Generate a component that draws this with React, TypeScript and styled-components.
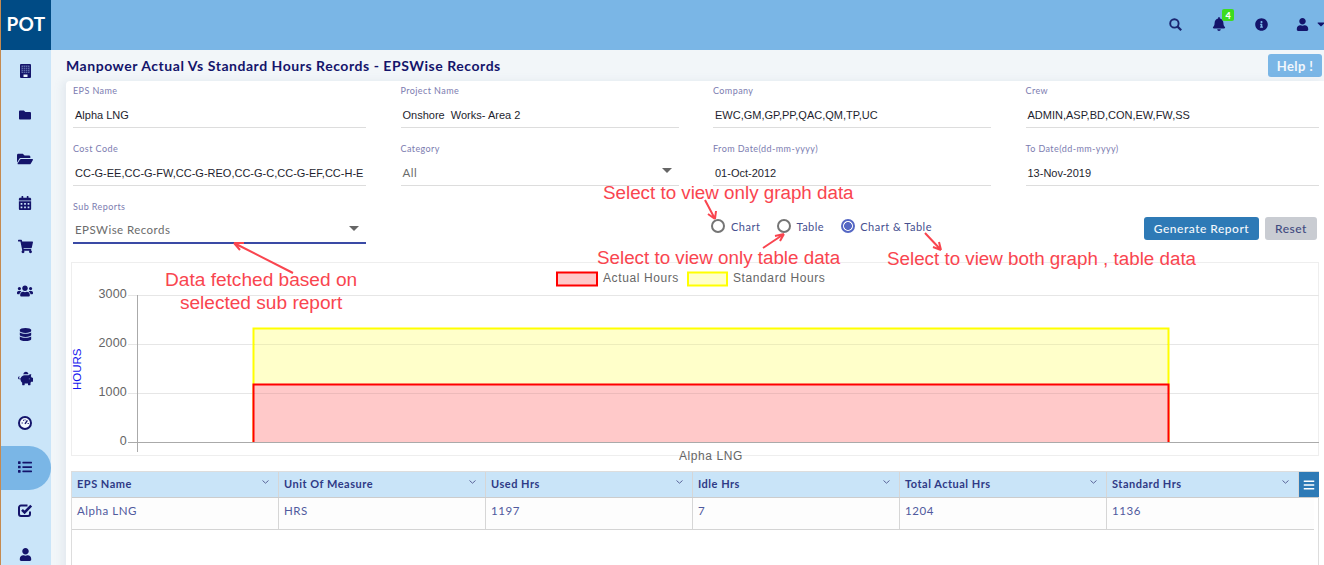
import React from "react";
import styled, { createGlobalStyle } from "styled-components";
import {
  FaFolder, FaFolderOpen, FaCalendarAlt, FaShoppingCart, FaUsers, FaDatabase,
  FaPiggyBank, FaList, FaUser, FaBell,
  FaInfoCircle, FaCaretDown, FaBars,
} from "react-icons/fa";

const Global = createGlobalStyle`
  html, body { margin: 0; padding: 0; height: 565px; overflow: hidden; background: #f2f6f9; }
  body { font-family: Lato, "Liberation Sans", sans-serif; }
  #root { height: 565px; }
`;
const Page = styled.div`
  position: relative; width: 1324px; height: 565px; overflow: hidden;
  display: grid; grid-template-columns: 51px 1fr;
`;
const Side = styled.aside`
  border-left: 1px solid #c58a50; background: #cae5f9; display: flex; flex-direction: column;
`;
const Logo = styled.div`
  height: 50px; flex: none; background: #004b85; color: #fff; font-weight: 700; font-size: 19px;
  display: flex; align-items: center; justify-content: center; padding-bottom: 4px; box-sizing: border-box;
  font-family: Lato, sans-serif; letter-spacing: 0.3px;
`;
const NavItem = styled.div<{ $active?: boolean }>`
  height: 44px; flex: none; display: flex; align-items: center; justify-content: center; padding: 0 2px 3px 0;
  box-sizing: border-box; color: #14146b; font-size: 14px;
  background: ${(p) => (p.$active ? "#7ab6e6" : "transparent")};
  border-radius: ${(p) => (p.$active ? "0 22px 22px 0" : "0")};
`;
const Main = styled.main`
  display: flex; flex-direction: column; min-width: 0;
`;
const Top = styled.header`
  height: 50px; flex: none; background: #7ab6e6; display: flex; justify-content: flex-end; color: #14146b;
`;
const TopItem = styled.div`
  position: relative; width: 43px; display: flex; align-items: center; justify-content: center; font-size: 13px;
  padding-bottom: 2px; box-sizing: border-box;
`;
const UserItem = styled(TopItem)`
  width: 41px; justify-content: flex-start; padding-left: 13px; gap: 6px; overflow: visible;
  svg + svg { font-size: 12px; flex: none; }
  svg { flex: none; }
`;
const Badge = styled.span`
  position: absolute; left: 25px; top: 9px; width: 12px; height: 12px; border-radius: 2px; background: #3ddc1f;
  color: #fff; font-size: 9px; font-weight: 900; display: flex; align-items: center; justify-content: center;
`;
const TitleRow = styled.div`
  height: 31px; flex: none; display: flex; align-items: center; justify-content: space-between;
  padding: 0 2px 0 15px; box-sizing: border-box;
`;
const Title = styled.h1`
  margin: 0; font-size: 14px; font-weight: 700; color: #14146b; letter-spacing: 0.54px;
`;
const Help = styled.button`
  width: 54px; height: 23px; border: 0; border-radius: 3px; background: #7ab6e6; color: #f2f7fc;
  font: 700 13px Lato, sans-serif; letter-spacing: 0.4px; padding: 0;
`;
const Card = styled.section`
  flex: 1; margin-left: 15px; background: #fff; border-radius: 4px 0 0 0; padding: 0 5px 0 5px;
  box-shadow: -4px 0 8px rgba(120, 150, 170, 0.12); min-height: 0; display: flex; flex-direction: column;
`;
const FormGrid = styled.div`
  display: grid; grid-template-columns: 293px 278px 278px 293px; column-gap: 34.5px; padding: 0 0 0 2px;
`;
const Field = styled.div<{ $w?: number }>`
  height: 58px; box-sizing: border-box; padding-top: 4px; flex: none;
  ${(p) => (p.$w ? `width: ${p.$w}px;` : "")}
`;
const Label = styled.div`
  font-size: 9px; line-height: 12px; color: #7c7cb0; letter-spacing: 0.42px; height: 12px;
`;
const Value = styled.div<{ $muted?: boolean; $active?: boolean }>`
  position: relative; height: 31px; padding: ${(p) => (p.$active ? "7px" : "8px")} 2px 0 2px; box-sizing: border-box; white-space: nowrap; overflow: hidden;
  line-height: 20px;
  border-bottom: ${(p) => (p.$active ? "2px solid #3a4aa5" : "1px solid #ddd")};
  font-family: ${(p) => (p.$muted ? 'Lato, sans-serif' : '"Liberation Sans", sans-serif')};
  font-size: ${(p) => (p.$muted ? "11.5px" : "11px")};
  letter-spacing: ${(p) => (p.$muted ? "0.45px" : "0")};
  color: ${(p) => (p.$muted ? "#6b6b6b" : "#1e1e2e")};
`;
const Caret = styled.span`
  position: absolute; right: 7px; top: 13px; width: 0; height: 0;
  border-left: 5px solid transparent; border-right: 5px solid transparent; border-top: 5px solid #666;
`;
const ActionRow = styled.div`
  display: flex; align-items: flex-start; padding-left: 2px; height: 58px;
`;
const Radios = styled.div`
  display: flex; align-items: center; margin-left: 345px; margin-top: 20px; height: 18px;
  color: #46508f; font-size: 11px; letter-spacing: 0.5px;
`;
const Radio = styled.span<{ $on?: boolean; $gap: number; $after: number }>`
  width: 14px; height: 14px; border-radius: 50%; box-sizing: border-box; flex: none;
  margin: 0 ${(p) => p.$after}px 0 ${(p) => p.$gap}px;
  border: 2px solid ${(p) => (p.$on ? "#5567c4" : "#757575")};
  background: ${(p) => (p.$on ? "radial-gradient(circle, #5567c4 0 3.6px, #fff 4.2px)" : "#fff")};
`;
const Buttons = styled.div`
  display: flex; gap: 6px; margin-left: auto; margin-right: 2px; margin-top: 20px;
`;
const Primary = styled.button`
  width: 115px; height: 23px; border: 0; border-radius: 3px; background: #2e7ab6; color: #f4f8fc; padding: 0;
  font: 500 12px Lato, sans-serif; letter-spacing: 0.5px;
`;
const Secondary = styled.button`
  width: 52px; height: 23px; border: 0; border-radius: 3px; background: #c9ccd2; color: #3f4a80; padding: 0;
  font: 500 12px Lato, sans-serif; letter-spacing: 0.5px;
`;
const ChartBox = styled.div`
  height: 194px; width: 1248px; box-sizing: border-box; border: 1px solid #eee; flex: none; margin-top: 7px;
  svg { display: block; overflow: visible; }
`;
const Grid = styled.div`
  margin-top: 15px; width: 1248px; flex: 1; border: 1px solid #ddd; border-bottom: 0; box-sizing: border-box; min-height: 0;
`;
const HeadRow = styled.div`
  display: grid; grid-template-columns: repeat(5, 207px) 192px 1fr; height: 25px; background: #c9e4f8; border-bottom: 1px solid #ccc;
`;
const HeadCell = styled.div`
  position: relative; padding: 0 0 2px 5px; display: flex; align-items: center; font-size: 11px; font-weight: 700;
  color: #2f3a86; letter-spacing: 0.5px; border-right: 1px solid #d6d6d6; box-sizing: border-box;
  svg { position: absolute; right: 9px; top: 8px; }
`;
const Menu = styled.div`
  background: #2e7ab6; color: #fff; display: flex; align-items: center; justify-content: center; font-size: 12px;
  width: 20px; justify-self: end;
`;
const BodyRow = styled.div`
  display: grid; grid-template-columns: repeat(6, 207px); width: 1242px; height: 31px; background: #fdfdfd; border-bottom: 1px solid #d4d4d4;
`;
const BodyCell = styled.div`
  padding: 0 0 7px 5px; display: flex; align-items: center; font-size: 11.5px; color: #505a9e; letter-spacing: 0.55px;
  border-right: 1px solid #d6d6d6; box-sizing: border-box;
  &:last-child { border-right: 0; }
`;
const Note = styled.div<{ $x: number; $y: number; $center?: boolean }>`
  position: absolute; left: ${(p) => p.$x}px; top: ${(p) => p.$y}px;
  font: ${(p) => (p.$center ? "19.1px" : "18.8px")}/22.5px "Liberation Sans", sans-serif; color: #f9454f; white-space: nowrap;
  text-align: ${(p) => (p.$center ? "center" : "left")};
`;
const Arrows = styled.svg`
  position: absolute; left: 0; top: 0; pointer-events: none;
`;

const Calc = () => (
  <svg width="11" height="14" viewBox="0 0 11 14">
    <rect width="11" height="14" rx="1" fill="#14146b" />
    <rect x="1.5" y="1.5" width="8" height="7.5" fill="#5c6aa8" />
    <path d="M1.5 3.5h8M1.5 5.5h8M1.5 7.5h8M3.5 1.5v7.5M5.5 1.5v7.5M7.5 1.5v7.5" stroke="#14146b" strokeWidth="0.6" />
    <rect x="3.5" y="10.5" width="4" height="2.5" fill="#e8f2fb" />
  </svg>
);
const Gauge = () => (
  <svg width="14" height="14" viewBox="0 0 14 14">
    <circle cx="7" cy="7" r="6" fill="#f3f8fd" stroke="#14146b" strokeWidth="2" />
    <path d="M7 7.8 L9.4 4.4" stroke="#14146b" strokeWidth="1.4" />
    <path d="M3.6 7h1.2M9.6 7.5h1.2M5 4.3h1M7 3.4v1" stroke="#14146b" strokeWidth="1" />
  </svg>
);
const CheckBox = () => (
  <svg width="15" height="15" viewBox="0 0 15 15" fill="none">
    <path d="M12 8.5v2.5a2 2 0 0 1-2 2H3a2 2 0 0 1-2-2V4.5a2 2 0 0 1 2-2h6.5" stroke="#14146b" strokeWidth="2" />
    <path d="M4 6.8 L6.6 9.4 L13.2 2.6" stroke="#14146b" strokeWidth="2.6" />
  </svg>
);
const Search = () => (
  <svg width="13" height="13" viewBox="0 0 13 13" fill="none" stroke="#1a2570">
    <circle cx="5.4" cy="5.4" r="4.2" strokeWidth="1.9" />
    <path d="M8.6 8.6 L12.2 12.2" strokeWidth="2.2" />
  </svg>
);
const Chevron = () => (
  <svg width="7" height="4" viewBox="0 0 7 4" fill="none" stroke="#5a6499" strokeWidth="1">
    <path d="M0.5 0.5 L3.5 3.2 L6.5 0.5" />
  </svg>
);

const nav: React.ReactNode[] = [
  <Calc />, <FaFolder size={12} />, <FaFolderOpen size={16} />, <FaCalendarAlt size={14} />,
  <FaShoppingCart size={15} />, <FaUsers size={16} />, <FaDatabase size={13} />, <FaPiggyBank size={15} />,
  <Gauge />, <FaList size={14} />, <CheckBox />, <FaUser size={13} />,
];
const fields = [
  ["EPS Name", "Alpha LNG"], ["Project Name", "Onshore  Works- Area 2"], ["Company", "EWC,GM,GP,PP,QAC,QM,TP,UC"], ["Crew", "ADMIN,ASP,BD,CON,EW,FW,SS"],
  ["Cost Code", "CC-G-EE,CC-G-FW,CC-G-REO,CC-G-C,CC-G-EF,CC-H-E"], ["Category", "All"], ["From Date(dd-mm-yyyy)", "01-Oct-2012"], ["To Date(dd-mm-yyyy)", "13-Nov-2019"],
];
const heads = ["EPS Name", "Unit Of Measure", "Used Hrs", "Idle Hrs", "Total Actual Hrs", "Standard Hrs"];
const cells = ["Alpha LNG", "HRS", "1197", "7", "1204", "1136"];
const ticks: [string, number][] = [["3000", 295], ["2000", 344], ["1000", 393], ["0", 442]];
const arrows = [
  "M293 273 L234 243 M234 243 l10 0 M234 243 l6 7",
  "M705 200 L715 219 M715 219 l-7 -5 M715 219 l1 -8",
  "M763 248 L784 234 M784 234 l-9 2 M784 234 l-4 7",
  "M925 233 L941 250 M941 250 l-2 -8 M941 250 l-8 -3",
];

const Chart = () => (
  <svg width={1246} height={192} viewBox="72 263 1246 192" role="img">
    <g fontFamily="'Liberation Sans', sans-serif" fontSize="12" fill="#666" letterSpacing="0.6">
      <rect x="557" y="272.5" width="40" height="13" fill="#ffc9c9" stroke="#f00" strokeWidth="2" />
      <text x="603" y="282">Actual Hours</text>
      <rect x="688" y="272.5" width="39" height="13" fill="#ffffca" stroke="#ff0" strokeWidth="2" />
      <text x="733" y="282">Standard Hours</text>
      {ticks.map(([t, y]) => (
        <g key={t}>
          <line x1="128" x2="1319" y1={y + 0.5} y2={y + 0.5} stroke="#e6e6e6" />
          <text x="127" y={y + 3} textAnchor="end" fontSize="12.5" letterSpacing="0.2">{t}</text>
        </g>
      ))}
      <path d="M253.5 442V328.5H1168.5V442" fill="#ffffca" stroke="#ff0" strokeWidth="2" />
      <path d="M253.5 442V384.5H1168.5V442" fill="#ffc9c9" stroke="#f00" strokeWidth="2" />
      <line x1="254" x2="1168" y1="344.5" y2="344.5" stroke="#000" strokeOpacity="0.07" />
      <line x1="254" x2="1168" y1="393.5" y2="393.5" stroke="#000" strokeOpacity="0.07" />
      <line x1="137.5" x2="137.5" y1="295" y2="452" stroke="#aaa" />
      <line x1="128" x2="1319" y1="442.5" y2="442.5" stroke="#aaa" />
      <text x="711" y="460" textAnchor="middle">Alpha LNG</text>
      <text transform="translate(81 390) rotate(-90)" fill="#1414ee" fontSize="11.5" letterSpacing="0">HOURS</text>
    </g>
  </svg>
);

export default function App() {
  return (
    <Page>
      <Global />
      <Side>
        <Logo>POT</Logo>
        {nav.map((icon, i) => (
          <NavItem key={i} $active={i === 9}>{icon}</NavItem>
        ))}
      </Side>
      <Main>
        <Top>
          <TopItem><Search /></TopItem>
          <TopItem><FaBell size={14} /><Badge>4</Badge></TopItem>
          <TopItem><FaInfoCircle /></TopItem>
          <UserItem><FaUser /><FaCaretDown /></UserItem>
        </Top>
        <TitleRow>
          <Title>Manpower Actual Vs Standard Hours Records - EPSWise Records</Title>
          <Help>Help !</Help>
        </TitleRow>
        <Card>
          <FormGrid>
            {fields.map(([l, v]) => (
              <Field key={l}>
                <Label>{l}</Label>
                <Value $muted={l === "Category"}>
                  {v.replace("  ", "\u00a0 ")}
                  {l === "Category" && <Caret />}
                </Value>
              </Field>
            ))}
          </FormGrid>
          <ActionRow>
            <Field $w={293}>
              <Label>Sub Reports</Label>
              <Value $muted $active>EPSWise Records<Caret /></Value>
            </Field>
            <Radios>
              <Radio $gap={0} $after={6} />Chart
              <Radio $gap={17} $after={5} />Table
              <Radio $gap={17} $on $after={5} />Chart &amp; Table
            </Radios>
            <Buttons>
              <Primary>Generate Report</Primary>
              <Secondary>Reset</Secondary>
            </Buttons>
          </ActionRow>
          <ChartBox><Chart /></ChartBox>
          <Grid>
            <HeadRow>
              {heads.map((h) => (
                <HeadCell key={h}>{h}<Chevron /></HeadCell>
              ))}
              <Menu><FaBars /></Menu>
            </HeadRow>
            <BodyRow>
              {cells.map((c, i) => <BodyCell key={i}>{c}</BodyCell>)}
            </BodyRow>
          </Grid>
        </Card>
      </Main>
      <Note $x={603} $y={182}>Select to view only graph data</Note>
      <Note $x={597} $y={247}>Select to view only table data</Note>
      <Note $x={887} $y={248}>Select to view both graph , table data</Note>
      <Note $x={165} $y={269} $center>Data fetched based on<br />selected sub report</Note>
      <Arrows width={1324} height={565} viewBox="0 0 1324 565">
        {arrows.map((d) => <path key={d} d={d} stroke="#f9454f" strokeWidth="2" fill="none" />)}
      </Arrows>
    </Page>
  );
}
